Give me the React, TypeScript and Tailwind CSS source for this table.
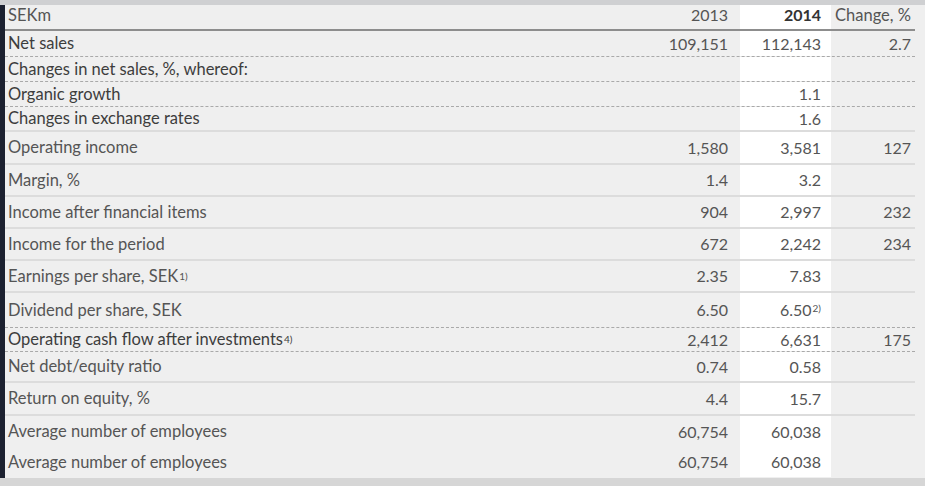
import React from 'react';

type Row = {
    label: React.ReactNode;
    y2013?: string;
    y2014?: React.ReactNode;
    change?: string;
    h: string;
    line: 'dotted' | 'solid' | 'none';
    dark?: boolean;
};

const Sup = ({ children }: { children: React.ReactNode }) => (
    <sup className="text-[10px] ml-[1px] relative -top-[2px]">{children}</sup>
);

const rows: Row[] = [
    { label: 'Net sales', y2013: '109,151', y2014: '112,143', change: '2.7', h: 'h-[26px]', line: 'dotted', dark: true },
    { label: 'Changes in net sales, %, whereof:', h: 'h-[25px]', line: 'dotted', dark: true },
    { label: 'Organic growth', y2014: '1.1', h: 'h-[25px]', line: 'dotted', dark: true },
    { label: 'Changes in exchange rates', y2014: '1.6', h: 'h-[25px]', line: 'solid', dark: true },
    { label: 'Operating income', y2013: '1,580', y2014: '3,581', change: '127', h: 'h-[33px]', line: 'solid' },
    { label: 'Margin, %', y2013: '1.4', y2014: '3.2', h: 'h-[32px]', line: 'solid' },
    { label: 'Income after financial items', y2013: '904', y2014: '2,997', change: '232', h: 'h-[32px]', line: 'solid' },
    { label: 'Income for the period', y2013: '672', y2014: '2,242', change: '234', h: 'h-[32px]', line: 'solid' },
    { label: <>Earnings per share, SEK<Sup>1)</Sup></>, y2013: '2.35', y2014: '7.83', h: 'h-[32px]', line: 'solid' },
    { label: 'Dividend per share, SEK', y2013: '6.50', y2014: <>6.50<Sup>2)</Sup></>, h: 'h-[35px]', line: 'dotted' },
    { label: <>Operating cash flow after investments<Sup>4)</Sup></>, y2013: '2,412', y2014: '6,631', change: '175', h: 'h-[24px]', line: 'dotted', dark: true },
    { label: 'Net debt/equity ratio', y2013: '0.74', y2014: '0.58', h: 'h-[31px]', line: 'solid' },
    { label: 'Return on equity, %', y2013: '4.4', y2014: '15.7', h: 'h-[33px]', line: 'solid' },
    { label: 'Average number of employees', y2013: '60,754', y2014: '60,038', h: 'h-[31px]', line: 'none' },
    { label: 'Average number of employees', y2013: '60,754', y2014: '60,038', h: 'h-[30px]', line: 'none' },
];

export default function App() {
    return (
        <div className="w-[925px] h-[486px] bg-[#c9cacd] flex flex-col overflow-hidden font-['Lato',sans-serif] text-[16.5px]">
            <div className="h-[5px] bg-[#cfd0d2]" />
            <div className="flex flex-1">
                {/* background photo peeking in on the left */}
                <div className="w-[5px] bg-[#1c2130]" />
                <div className="flex-1 bg-[#efefef] flex flex-col pr-[10px]">
                    {/* header */}
                    <div className="flex h-[26px] border-b-2 border-[#8d8d8d] text-[#555]">
                        <div className="flex-1 pl-[3px] leading-[20px]">SEKm</div>
                        <div className="w-[100px] text-right pr-[12px] leading-[20px] text-[16px]">2013</div>
                        <div className="w-[91px] bg-white text-right pr-[10px] leading-[20px] text-[16px] font-bold text-[#333]">2014</div>
                        <div className="w-[84px] text-right pr-[4px] leading-[20px] text-[16.5px] whitespace-nowrap">Change, %</div>
                    </div>
                    {rows.map((r, i) => (
                        <div
                            key={i}
                            className={`flex items-center ${r.h} ${
                                r.line === 'dotted'
                                    ? 'border-b border-dashed border-[#a9a9a9]'
                                    : r.line === 'solid'
                                    ? 'border-b-2 border-[#dcdcdc]'
                                    : ''
                            } ${r.dark ? 'text-[#3d3d3d]' : 'text-[#555]'}`}
                        >
                            <div className="flex-1 pl-[3px] whitespace-nowrap">{r.label}</div>
                            <div className="w-[100px] text-right pr-[12px] text-[16px] text-[#555]">{r.y2013}</div>
                            <div className="w-[91px] h-full bg-white flex items-center justify-end pr-[10px] text-[16px] text-[#555]">
                                {r.y2014}
                            </div>
                            <div className="w-[84px] text-right pr-[4px] text-[16px] text-[#555]">{r.change}</div>
                        </div>
                    ))}
                    <div className="flex-1" />
                </div>
            </div>
            <div className="h-[8px] bg-[#d6d6d6]" />
        </div>
    );
}
